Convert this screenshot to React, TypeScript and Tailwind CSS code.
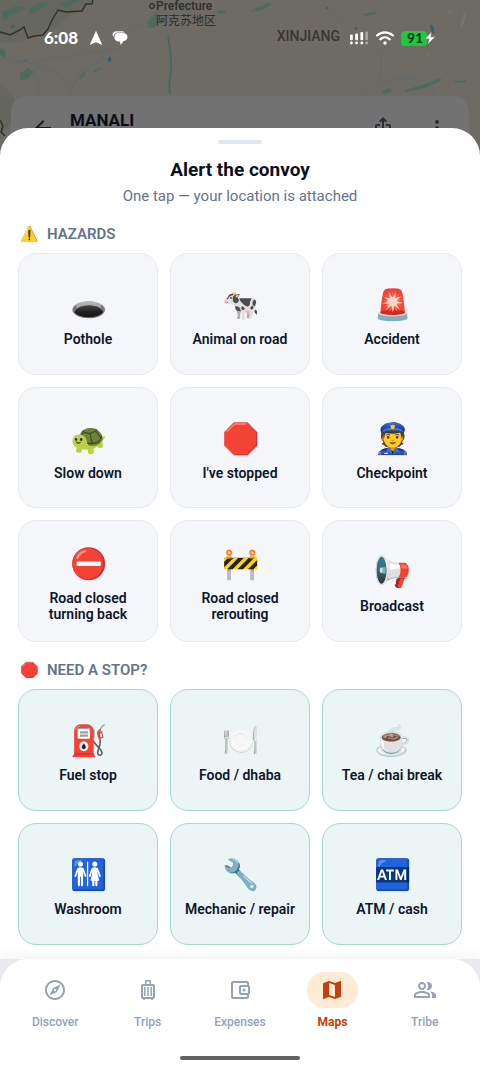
import type { IconType } from "react-icons";
import {
  MdArrowBack,
  MdIosShare,
  MdMap,
  MdMoreVert,
  MdOutlineAccountBalanceWallet,
  MdOutlineExplore,
  MdOutlineLuggage,
  MdOutlinePeopleAlt,
} from "react-icons/md";

type Alert = { emoji: string; label: string; mirrored?: boolean };

const hazards: Alert[] = [
  { emoji: "🕳️", label: "Pothole" },
  { emoji: "🐄", label: "Animal on road" },
  { emoji: "🚨", label: "Accident" },
  { emoji: "🐢", label: "Slow down" },
  { emoji: "🛑", label: "I've stopped" },
  { emoji: "👮", label: "Checkpoint" },
  { emoji: "⛔", label: "Road closed\nturning back" },
  { emoji: "🚧", label: "Road closed\nrerouting" },
  { emoji: "📢", label: "Broadcast", mirrored: true },
];

const stops: Alert[] = [
  { emoji: "⛽", label: "Fuel stop" },
  { emoji: "🍽️", label: "Food / dhaba" },
  { emoji: "☕", label: "Tea / chai break" },
  { emoji: "🚻", label: "Washroom" },
  { emoji: "🔧", label: "Mechanic / repair" },
  { emoji: "🏧", label: "ATM / cash" },
];

const tabs: { label: string; icon: IconType; active?: boolean }[] = [
  { label: "Discover", icon: MdOutlineExplore },
  { label: "Trips", icon: MdOutlineLuggage },
  { label: "Expenses", icon: MdOutlineAccountBalanceWallet },
  { label: "Maps", icon: MdMap, active: true },
  { label: "Tribe", icon: MdOutlinePeopleAlt },
];

function MapBackdrop() {
  return (
    <div className="absolute inset-x-0 top-0 h-48 overflow-hidden bg-[#6d6b64]" aria-hidden="true">
      <svg className="h-full w-full" viewBox="0 0 480 192" preserveAspectRatio="xMidYMin slice" fill="none">
        <path d="M0 0h92c-8 14-20 10-30 22-12 12-24 8-34 16-10 6-18 2-28 6z" fill="#66675f" />
        <path d="M0 84c10 6 18 14 14 30-3 12-8 16-14 20z" fill="#65665f" />
        <g fill="#4d6a5f">
          <path d="M2 12l14-6 10 2-12 6-10 6zM30 8l12-6 8 1-10 7-12 5zM58 4l14-4h8l-14 8zM148 20l8-8 3 10-5 6-7-1zM256 8l12-5 4 1-10 6-12 2zM218 11l8-1v3l-8 1zM405 90l14-4 22-8v3l-16 7-20 4zM454 81l12-1v2l-10 1zM382 91l8-3 2 4-8 2zM20 74l8-6 6 4-6 6-8 3zM93 71l8-4v2l-7 4zM80 76l5-5 1 3-5 5zM0 48l5 2 1 8-6-3zM108 58l2-2 1 4-2 1zM22 60l6-1-2 4zM362 14l14-2 1 2-12 2z" />
        </g>
        <g stroke="#5e6b72" strokeWidth="1.1">
          <path d="M0 58c14 6 22 2 34 6 16-10 36-4 52-12 14 2 26-6 38-2M34 64c10 8 20 4 26 12 8 6 12 6 14 10M35 66c-2 10 6 14 4 28M70 96c2-14 8-16 12-24 10-6 16-10 22-14M124 34c10-8 22-8 30-18M322 0c8 10 18 14 26 28M356 98c10-4 18-14 28-16 14-6 34-4 44 0 8 4 6 10 6 14M382 50c-2 10 2 22-4 30" />
          <path d="M168 36c2 12 4 24 3 34s-3 14-1 24" stroke="#46666a" strokeWidth="1.7" />
        </g>
        <g fill="#395c6d">
          <path d="M108 58l3-1v4l-3 1zM10 27l5-3-2 4zM325 8l3-1v2zM354 28l4-1-2 3zM430 24l4 3v8l-3-4z" />
        </g>
        <path d="M0 32l10 3 10-5 4-3 4 11 6-2 9-1 5-6 4-9 6-10 8 2 16-1 4-7h6l1-5M0 120l3 6-2 6 4 4" stroke="#2f2f2c" strokeWidth="1.4" />
        <path d="M464 12l3 2-5 14-2-2zM448 12l3-2-1 6zM427 52l2 1-3 6z" fill="#75736c" />
        <circle cx="152" cy="6" r="2.3" stroke="#2e2e2c" strokeWidth="1.3" />
      </svg>
      <p className="absolute left-[156px] top-0 text-xs leading-3 font-medium text-[#2e2e2c]">
        Prefecture
        <br />
        <span lang="zh" className="font-['Noto_Sans_CJK_SC',sans-serif] leading-4 font-normal">阿克苏地区</span>
      </p>
      <p className="absolute top-7 right-[140px] text-sm leading-4 font-medium text-[#383733]">XINJIANG</p>
    </div>
  );
}

function StatusBar() {
  return (
    <div className="flex h-7 items-center justify-between pr-[43px] pl-11 text-white">
      <div className="flex items-center">
        <span className="font-['Lato',sans-serif] text-[17px] leading-7 font-black">6:08</span>
        <svg className="ml-2.5 h-4 w-4" viewBox="0 0 16 16" fill="currentColor" aria-hidden="true">
          <path d="M8 .8 14.3 15 8 12.2 1.7 15z" />
        </svg>
        <svg className="ml-2 h-4 w-4" viewBox="0 0 16 16" fill="currentColor" aria-hidden="true">
          <path d="M4.600 1.200h4.600c1.700 0 2.900.5 3.700 1.200H6C3.500 2.400 1.900 4 1.700 6.700.9 6.100.5 5.200.5 4.300c0-1.800 1.600-3.100 4.100-3.100z" />
          <path d="M6.600 3h4c2.900 0 4.900 1.600 4.900 4 0 2.300-1.700 3.900-4.200 4.300L8.800 15l-.9-3.600H6.600C4 11.400 2.400 9.600 2.400 7.200S4 3 6.600 3z" />
        </svg>
      </div>
      <div className="flex items-center">
        <svg className="h-4 w-5" viewBox="0 0 20 16" fill="currentColor" aria-hidden="true">
          <rect x="1" y="4.500" width="2.800" height="5.700" rx="1" />
          <rect x="6.200" y="3.500" width="2.800" height="6.700" rx="1" />
          <rect x="11.400" y="2" width="2.800" height="8.200" rx="1" />
          <rect x="1" y="11.600" width="2.800" height="2.800" rx="1.300" />
          <rect x="6.200" y="11.600" width="2.800" height="2.800" rx="1.300" />
          <rect x="11.400" y="11.600" width="2.800" height="2.800" rx="1.300" />
          <g opacity=".45">
            <rect x="16.400" y="1.500" width="2.400" height="8.700" rx="1" />
            <rect x="16.400" y="11.600" width="2.400" height="2.800" rx="1" />
          </g>
        </svg>
        <svg className="ml-1.5 h-4 w-5" viewBox="0 0 20 16" fill="none" stroke="currentColor" strokeWidth="2.300" strokeLinecap="round" aria-hidden="true">
          <path d="M2 5.500c4.600-4.300 11.400-4.300 16 0M5.300 9.300c2.700-2.500 6.700-2.500 9.400 0" />
          <circle cx="10" cy="13" r="1.100" fill="currentColor" strokeWidth="1.200" />
        </svg>
        <span className="ml-1.5 flex h-[15px] w-[26px] items-center justify-center rounded-[4px] bg-[#20c741] pl-0.5 font-['Lato',sans-serif] text-sm leading-none font-bold text-[#0c3414]">
          91
        </span>
        <svg className="-ml-1 h-4 w-3.5" viewBox="0 0 14 16" fill="currentColor" aria-hidden="true">
          <path d="M8.500 1.800 1.800 9h4.200L4.600 14.400 12.400 6.800H8z" stroke="#6d6b64" strokeWidth=".6" />
        </svg>
      </div>
    </div>
  );
}

function AlertSection({ icon, title, items, tone }: { icon: string; title: string; items: Alert[]; tone: "neutral" | "teal" }) {
  const toneClass = tone === "teal" ? "border-[#a8d8cf] bg-[#ebf5f5]" : "border-[#e6e9ee] bg-[#f4f6fa]";
  return (
    <section className="mt-[18px]">
      <h2 className="flex h-5 items-center gap-2 pl-0.5 text-[15px] leading-5 font-semibold text-[#64748b]">
        <span className="text-[15px]" aria-hidden="true">{icon}</span>
        {title}
      </h2>
      <div className="mt-[9px] grid grid-cols-3 gap-3">
        {items.map((item) => (
          <button
            key={item.label}
            type="button"
            className={`flex aspect-[1.15] flex-col items-center justify-center gap-1 rounded-[18px] border pt-0.5 ${toneClass}`}
          >
            <span className={`h-11 text-[30px] leading-11 ${item.mirrored ? "-scale-x-100" : ""}`} aria-hidden="true">
              {item.emoji}
            </span>
            <span className="text-sm leading-4 font-semibold whitespace-pre-line text-[#0f172a]">{item.label}</span>
          </button>
        ))}
      </div>
    </section>
  );
}

export default function App() {
  return (
    <div className="relative flex min-h-screen flex-col font-['Roboto','Noto_Sans_CJK_SC',sans-serif]">
      <MapBackdrop />
      <header className="relative pt-6">
        <StatusBar />
        <div className="mx-[11px] mt-11 flex h-16 items-center rounded-2xl bg-[#727272] pr-5 pl-5 text-[#1c1d22]">
          <button type="button" aria-label="Back"><MdArrowBack size={24} /></button>
          <span className="flex-1 self-start pt-3 pl-[15px] text-[17px] leading-6 font-bold text-[#0a0d18]">MANALI</span>
          <button type="button" aria-label="Share" className="text-[#2b2f38]"><MdIosShare size={24} /></button>
          <button type="button" aria-label="More options" className="ml-[30px] text-[#2b2f38]"><MdMoreVert size={24} /></button>
        </div>
      </header>

      <main className="relative -mt-8 flex-1 rounded-t-[28px] bg-white px-[18px] pt-3 pb-3.5">
        <div className="mx-auto h-1 w-11 rounded-full bg-[#e2e6f0]" />
        <h1 className="mt-3.5 text-center text-[19px] leading-6 font-bold text-[#0b1020]">Alert the convoy</h1>
        <p className="mt-1 text-center text-[15px] leading-5 text-[#64748b]">One tap — your location is attached</p>
        <AlertSection icon="⚠️" title="HAZARDS" items={hazards} tone="neutral" />
        <AlertSection icon="🛑" title="NEED A STOP?" items={stops} tone="teal" />
      </main>

      <div className="relative bg-[#e9eaef] shadow-[0_-2px_12px_rgba(15,23,42,0.06)]">
        <nav className="rounded-t-[28px] bg-white px-[9px] pt-[13px] pb-3">
          <ul className="grid grid-cols-5">
            {tabs.map(({ label, icon: Icon, active }) => (
              <li key={label}>
                <a
                  href="#"
                  aria-current={active ? "page" : undefined}
                  className={`flex flex-col items-center gap-1 text-xs leading-5 ${active ? "font-bold text-[#c2410c]" : "font-medium text-[#94a3b8]"}`}
                >
                  <span className={`flex h-9 w-[51px] items-center justify-center rounded-full ${active ? "bg-[#feebd5]" : ""}`}>
                    <Icon size={24} />
                  </span>
                  {label}
                </a>
              </li>
            ))}
          </ul>
          <div className="mx-auto mt-6 h-1 w-30 rounded-full bg-[#636363]" />
        </nav>
      </div>
    </div>
  );
}
